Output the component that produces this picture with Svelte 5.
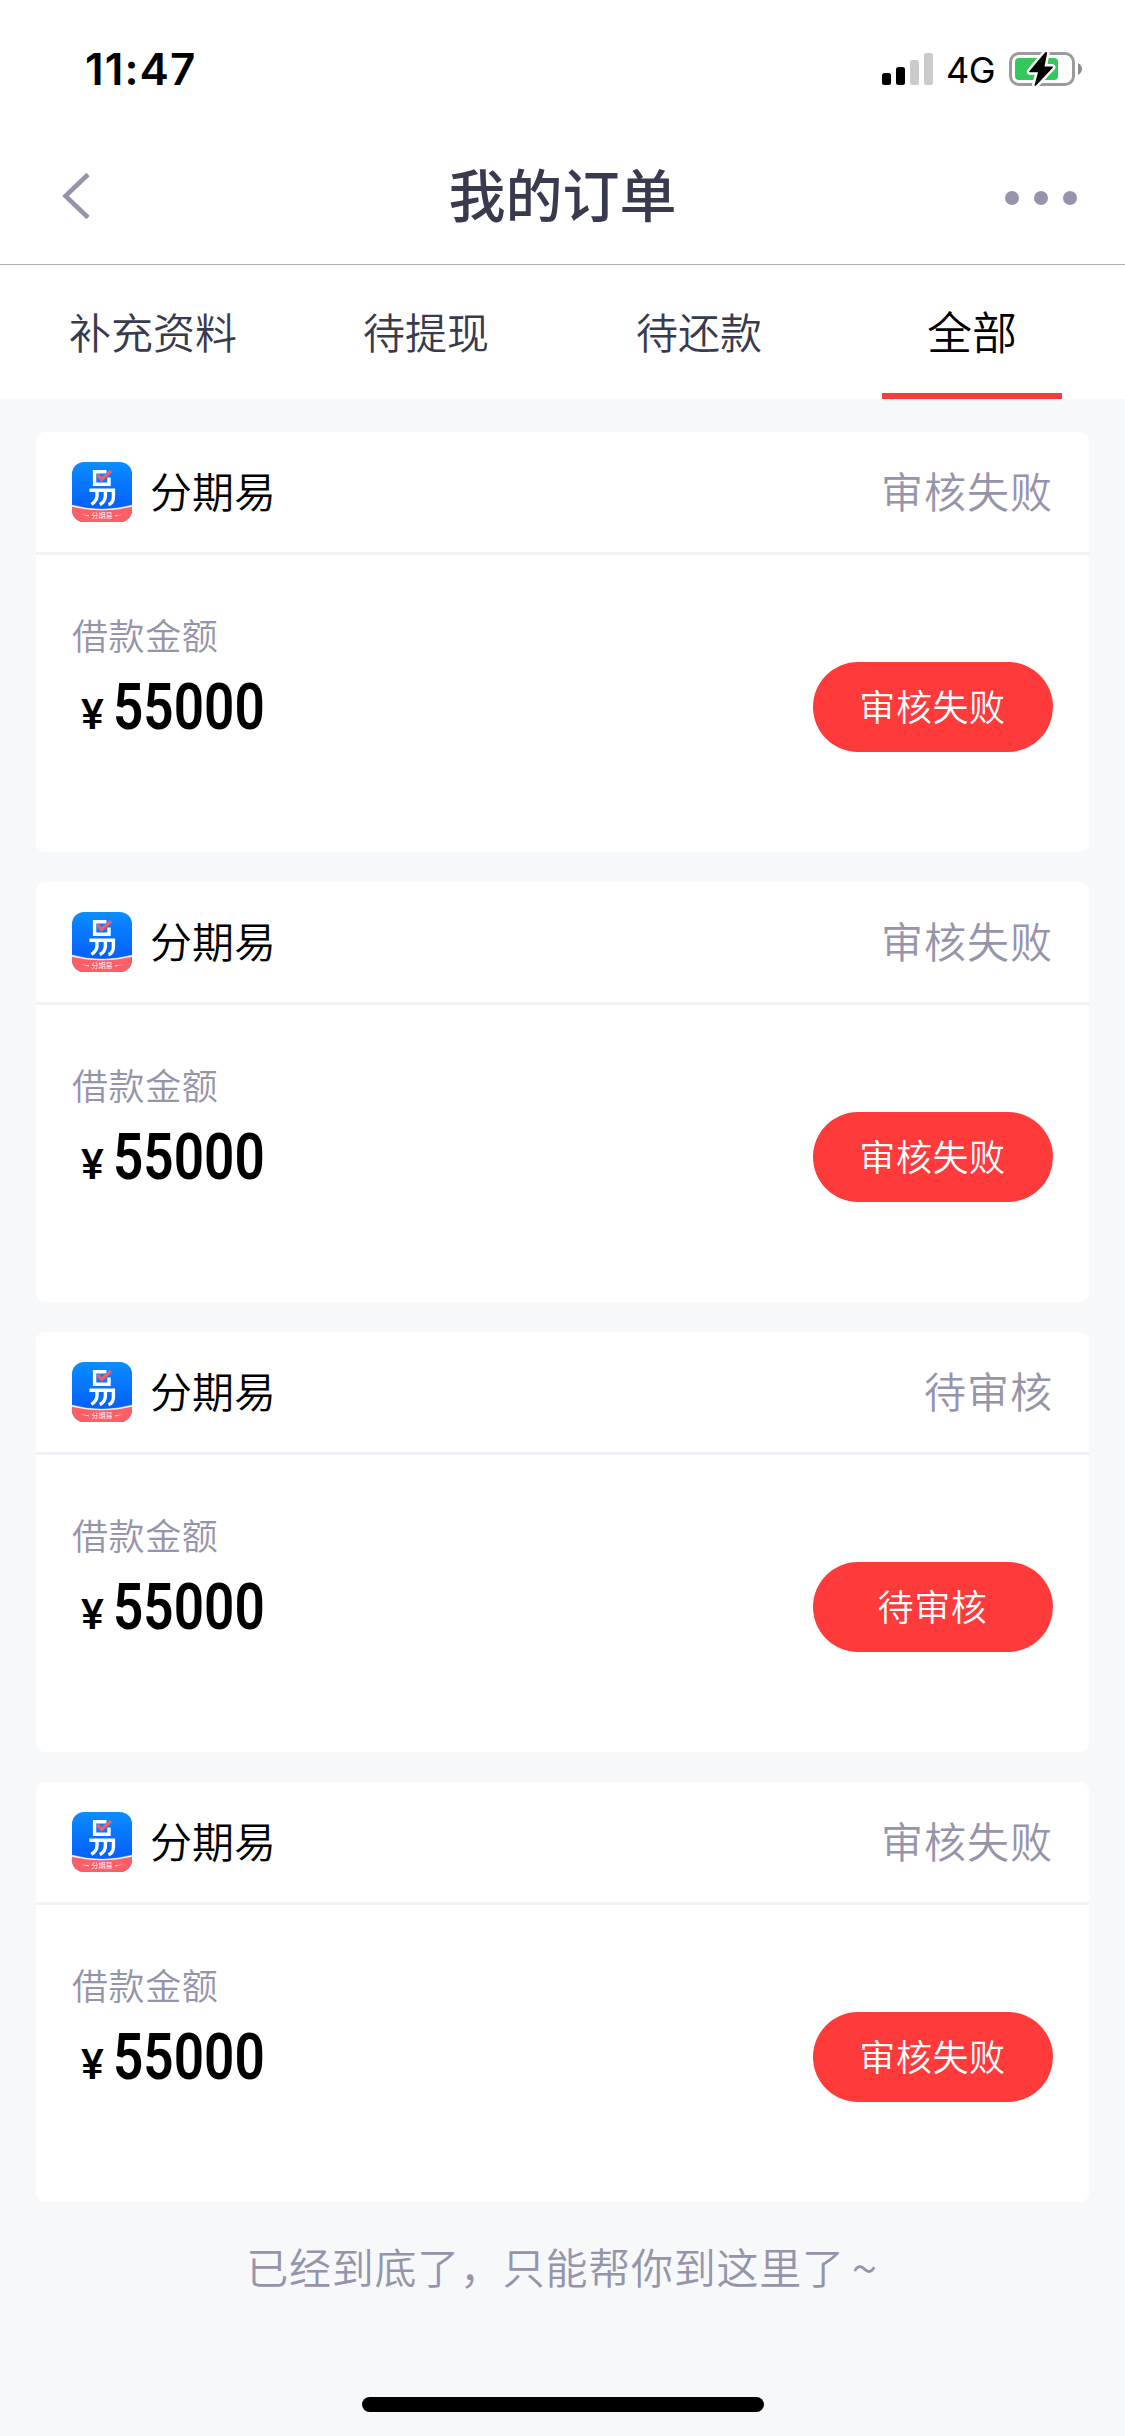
<script lang="ts">
	type Order = {
		id: number;
		product: string;
		status: string;
		amount: number;
	};

	const tabs = ['补充资料', '待提现', '待还款', '全部'];

	const orders: Order[] = [
		{ id: 1, product: '分期易', status: '审核失败', amount: 55000 },
		{ id: 2, product: '分期易', status: '审核失败', amount: 55000 },
		{ id: 3, product: '分期易', status: '待审核', amount: 55000 },
		{ id: 4, product: '分期易', status: '审核失败', amount: 55000 }
	];

	let activeTab = $state(3);
</script>

<div class="screen">
	<header class="status-bar">
		<span class="clock">11:47</span>
		<div class="indicators">
			<svg class="signal" width="52" height="32" viewBox="0 0 52 32">
				<rect x="0" y="20" width="9" height="12" rx="2.5" />
				<rect x="14" y="14" width="9" height="18" rx="2.5" />
				<rect x="28" y="7" width="9" height="25" rx="2.5" fill="#cbcbcb" />
				<rect x="42" y="0" width="9" height="32" rx="2.5" fill="#cbcbcb" />
			</svg>
			<span class="network">4G</span>
			<svg class="battery" width="74" height="36" viewBox="0 0 74 36">
				<rect x="1.5" y="2.5" width="63" height="31" rx="8.5" fill="none" stroke="#9b9b9b" stroke-width="3" />
				<rect x="6" y="7" width="43" height="22" rx="4" fill="#34c759" />
				<path d="M69 12 q4 2.5 4 6 t-4 6 z" fill="#8c8c8c" />
				<path
					d="M36 1.5 L20.5 20 q-.8 1.2 .7 1.2 H29 L25.6 34 q-.2 1.6 1.4 .5 L43.8 16.8 q.8 -1.2 -.7 -1.2 H35.5 L38.2 2 q0 -1.6 -2.2 -.5 z"
					stroke="#fff"
					stroke-width="5"
					paint-order="stroke"
				/>
			</svg>
		</div>
	</header>

	<nav class="nav-bar">
		<button class="back" aria-label="返回">
			<svg width="30" height="48" viewBox="0 0 30 48">
				<path d="M27 2.5 L4.5 24 L27 45.5" fill="none" stroke="#9694aa" stroke-width="4.6" />
			</svg>
		</button>
		<h1>我的订单</h1>
		<button class="more" aria-label="更多">
			<i></i><i></i><i></i>
		</button>
	</nav>

	<div class="tabs">
		{#each tabs as tab, i}
			<button class="tab" class:active={i === activeTab} onclick={() => (activeTab = i)}>
				<span>{tab}</span>
			</button>
		{/each}
	</div>

	<main class="orders">
		{#each orders as order (order.id)}
			<article class="card">
				<div class="card-head">
					<svg class="logo" width="60" height="60" viewBox="0 0 60 60">
						<defs>
							<linearGradient id="blue-{order.id}" x1="0" y1="0" x2="0" y2="1">
								<stop offset="0" stop-color="#0a8dff" />
								<stop offset="0.75" stop-color="#0560fd" />
							</linearGradient>
							<clipPath id="tile-{order.id}">
								<rect width="60" height="60" rx="12" />
							</clipPath>
						</defs>
						<g clip-path="url(#tile-{order.id})">
							<rect width="60" height="60" fill="url(#blue-{order.id})" />
							<path d="M0 44 Q30 51.6 60 44 V60 H0 Z" fill="#fc5f66" />
							<path d="M-1 43 Q30 51.6 61 43 V44.2 Q30 51.8 -1 44.2 Z" fill="#fff" stroke="#fff" stroke-width="0.6" />
							<g fill="none" stroke="#fff" stroke-width="3.4">
								<path d="M34.5 9.8 H22.6 V22.2 H37 V15.5" />
								<path d="M17.4 28.3 H41.4 V35 Q41.4 41 36.4 42.6" />
								<path d="M25 29 V34 Q24.8 39 19.4 42.4" />
								<path d="M33.4 29 V34 Q33.2 40 27.8 42.6" />
							</g>
							<path d="M25.4 12.8 L29.6 17.4 L39 9" fill="none" stroke="#ef5d72" stroke-width="3.4" />
							<path d="M9 52.4 L17 53.3 V54.6 Z M51 52.4 L43 53.3 V54.6 Z" fill="#ffe3e4" />
							<text x="30" y="56.4" text-anchor="middle" textLength="21" font-size="7" fill="#fff">{order.product}</text>
						</g>
					</svg>
					<span class="product">{order.product}</span>
					<span class="status">{order.status}</span>
				</div>
				<div class="card-body">
					<div class="loan">
						<div class="loan-label">借款金额</div>
						<div class="loan-amount">
							<span class="currency">¥</span>
							<span class="figure">{order.amount}</span>
						</div>
					</div>
					<button class="action">{order.status}</button>
				</div>
			</article>
		{/each}
	</main>

	<p class="list-end">已经到底了，只能帮你到这里了<span>~</span></p>
	<div class="home-indicator"></div>
</div>

<style>
	:global(body) {
		margin: 0;
		background: #f6f8fa;
	}

	.screen {
		display: flex;
		flex-direction: column;
		width: 1125px;
		height: 2436px;
		overflow: hidden;
		background: #f6f8fa;
		font-family: 'Noto Sans CJK SC', 'Noto Sans', sans-serif;
		font-weight: 350;
		color: #000;
	}

	button {
		padding: 0;
		border: 0;
		background: none;
		font: inherit;
		color: inherit;
	}

	svg {
		display: block;
		flex: none;
	}

	.status-bar {
		display: flex;
		justify-content: space-between;
		align-items: center;
		box-sizing: border-box;
		height: 132px;
		padding: 6px 42px 0 85px;
		background: #fff;
		font-family: Inter, sans-serif;
		font-weight: 400;
	}

	.clock {
		font-size: 44px;
		font-weight: 600;
		line-height: 44px;
		letter-spacing: 1.1px;
	}

	.indicators {
		display: flex;
		align-items: center;
	}

	.network {
		margin: 2px 14px 0 12px;
		font-size: 36px;
		line-height: 36px;
		letter-spacing: -0.5px;
	}

	.nav-bar {
		display: flex;
		justify-content: space-between;
		align-items: center;
		box-sizing: border-box;
		height: 133px;
		padding: 0 48px 0 61px;
		border-bottom: 1px solid #aeaeb0;
		background: #fff;
	}

	.back,
	.more {
		display: flex;
		align-items: center;
		width: 90px;
		height: 90px;
	}

	.back {
		padding-bottom: 4px;
	}

	.more {
		justify-content: flex-end;
		gap: 15px;
	}

	.more i {
		width: 14px;
		height: 14px;
		border-radius: 50%;
		background: #9694aa;
	}

	h1 {
		margin: 0 0 13px -13px;
		font-size: 57px;
		font-weight: 500;
		line-height: 80px;
		color: #393a4d;
	}

	.tabs {
		display: flex;
		height: 134px;
		padding: 0 16.5px;
		background: #fff;
	}

	.tab {
		display: flex;
		flex: 1;
		justify-content: center;
		font-size: 42px;
		color: #393a4d;
	}

	.tab span {
		box-sizing: border-box;
		height: 134px;
		line-height: 132px;
	}

	.tab.active span {
		width: 180px;
		border-bottom: 6px solid #fa3c3a;
		font-size: 45px;
		color: #000;
	}

	.orders {
		display: flex;
		flex-direction: column;
		gap: 30px;
		padding: 33px 36px 0;
	}

	.card {
		height: 420px;
		border-radius: 9px;
		background: #fff;
	}

	.card-head {
		display: flex;
		align-items: center;
		height: 120px;
		padding: 0 36px;
		border-bottom: 3px solid #f1f2f8;
		font-size: 42px;
	}

	.product,
	.status {
		padding-bottom: 6px;
	}

	.product {
		margin-left: 18px;
	}

	.status {
		margin-left: auto;
		letter-spacing: 1px;
		color: #9694aa;
	}

	.card-body {
		display: flex;
		justify-content: space-between;
		align-items: flex-start;
		padding: 0 36px;
	}

	.loan {
		padding-top: 57px;
	}

	.loan-label {
		font-size: 36px;
		line-height: 44px;
		letter-spacing: 0.6px;
		color: #9694aa;
	}

	.loan-amount {
		display: flex;
		align-items: baseline;
		margin-top: 15px;
		padding-left: 9px;
		font-family: Roboto, sans-serif;
		line-height: 74px;
	}

	.currency {
		width: 32px;
		font-size: 43px;
		font-weight: 500;
	}

	.figure {
		font-size: 64px;
		font-weight: 600;
		transform: scaleX(0.83);
		transform-origin: left;
	}

	.action {
		width: 240px;
		height: 90px;
		margin-top: 107px;
		padding: 0 1px 4px 0;
		border-radius: 45px;
		background: #fe3a3a;
		font-size: 36px;
		letter-spacing: 0.6px;
		color: #fff;
	}

	.list-end {
		margin: 34px 0 0;
		padding-right: 2px;
		font-size: 42px;
		line-height: 60px;
		letter-spacing: 0.75px;
		text-align: center;
		color: #9694aa;
	}

	.list-end span {
		display: inline-block;
		margin: 0 -1px 0 7px;
		font-size: 46px;
		line-height: 52px;
		transform: translateY(2px);
	}

	.home-indicator {
		width: 402px;
		height: 15px;
		margin: auto auto 24px;
		border-radius: 8px;
		background: #000;
	}
</style>
